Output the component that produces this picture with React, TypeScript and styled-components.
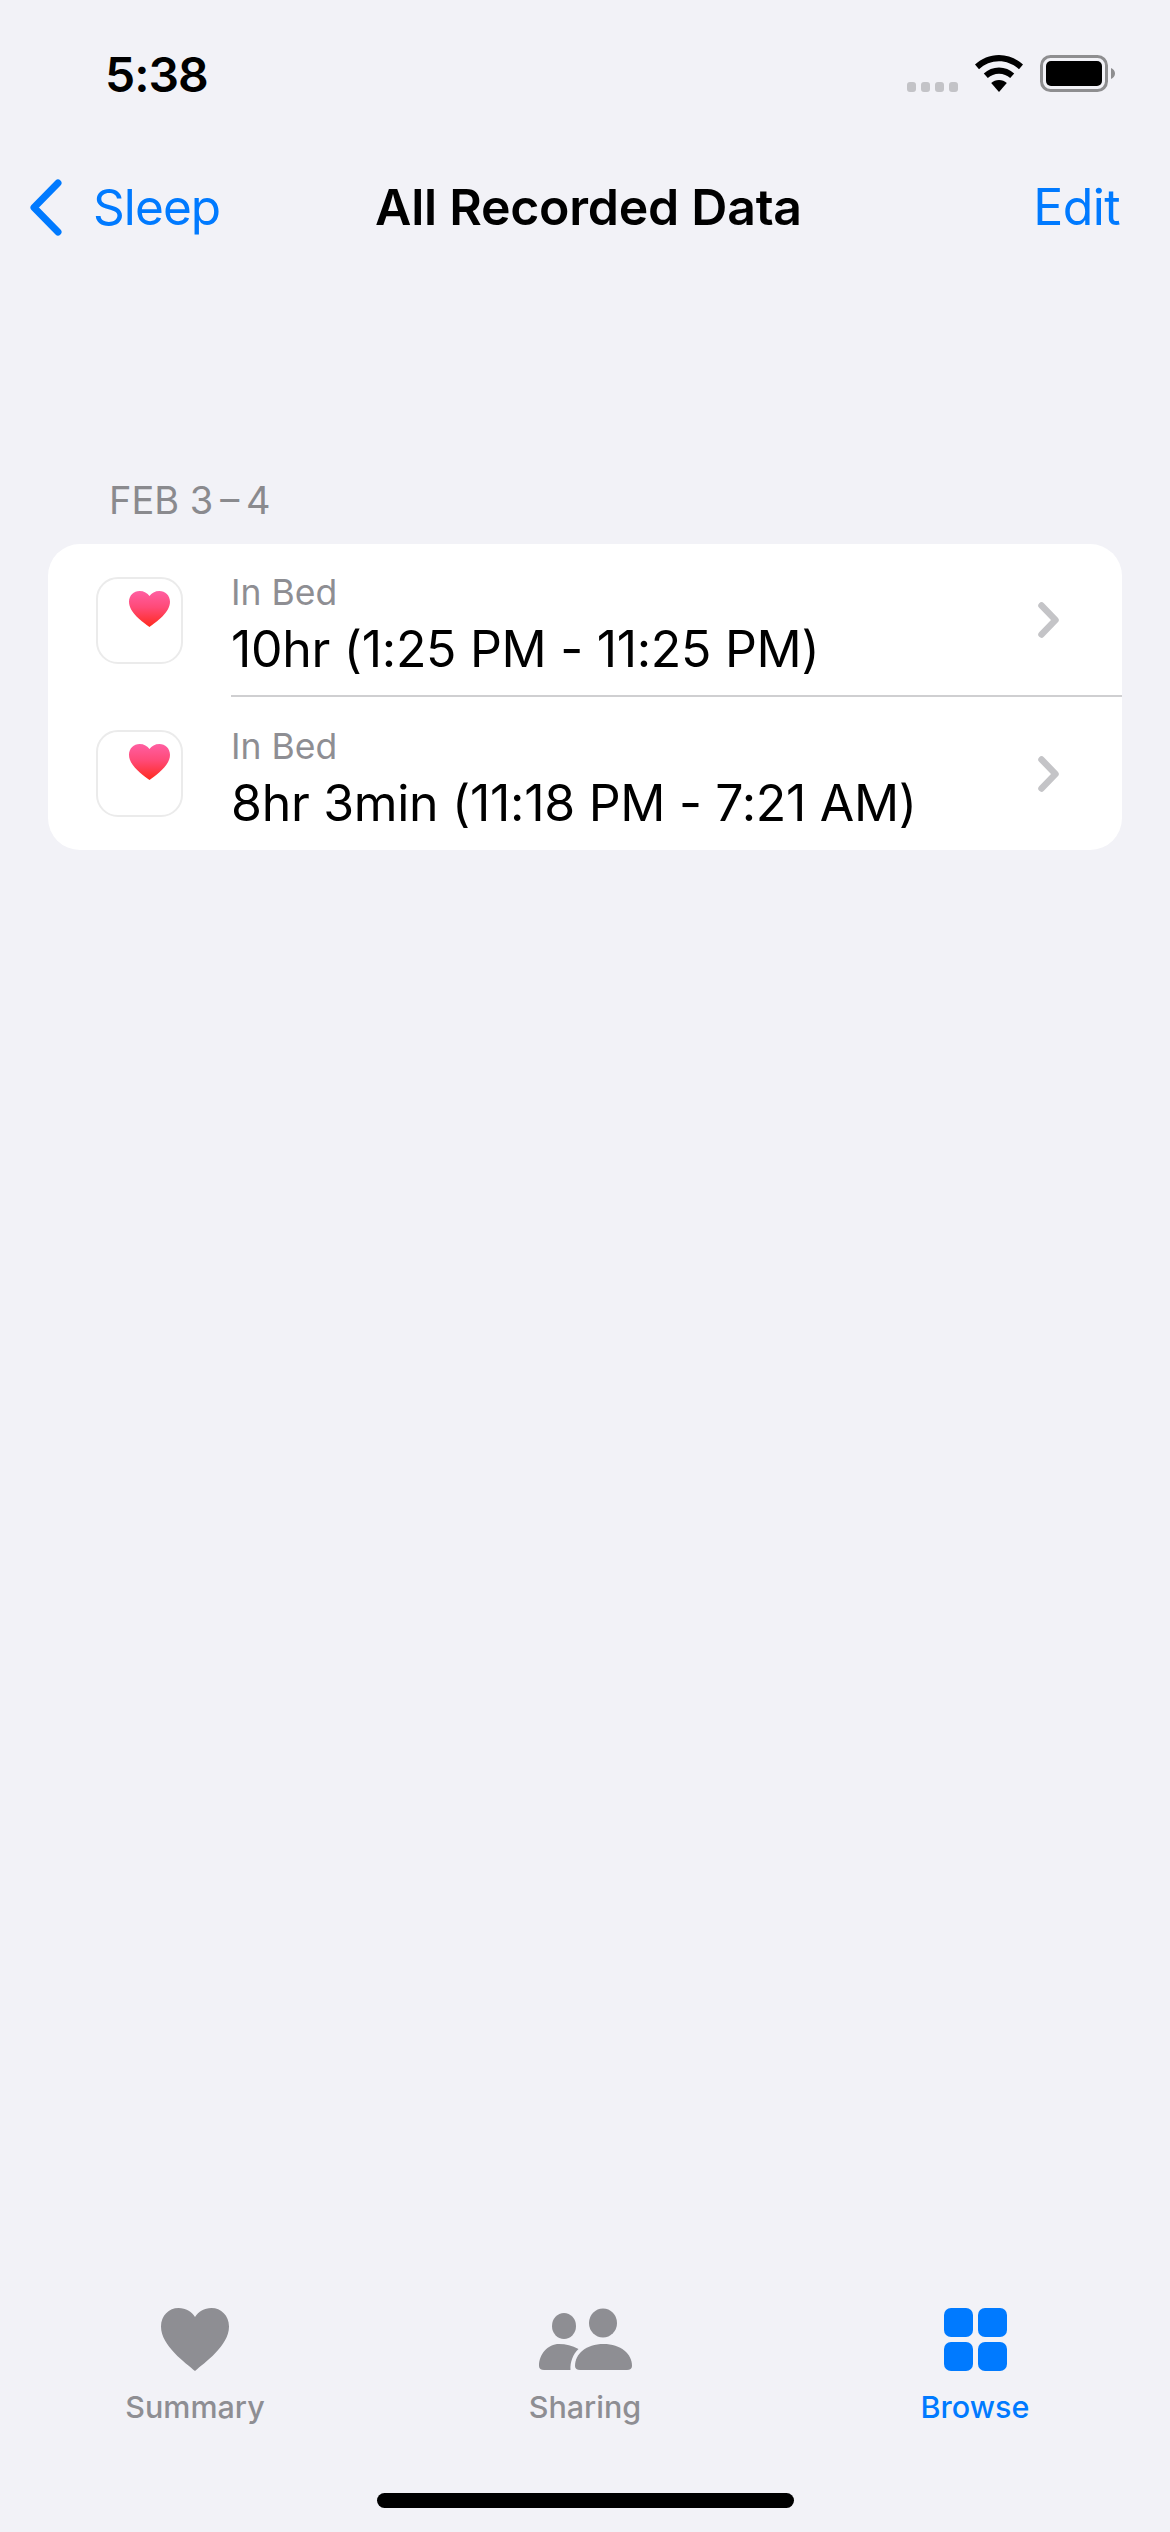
import styled, { createGlobalStyle } from "styled-components";

const GlobalStyle = createGlobalStyle`
  html, body {
    margin: 0;
    padding: 0;
    background-color: #f2f2f7;
  }
  * {
    box-sizing: border-box;
  }
`;

const Page = styled.div`
  display: flex;
  flex-direction: column;
  width: 1170px;
  height: 2532px;
  overflow: hidden;
  background-color: #f2f2f7;
  color: #000;
  font-family: Inter, "Liberation Sans", sans-serif;
`;

const StatusBar = styled.div`
  display: flex;
  justify-content: space-between;
  align-items: flex-start;
  height: 163px;
  padding: 44px 55px 0 105px;
`;

const Time = styled.div`
  font-size: 48px;
  font-weight: 600;
  line-height: 62px;
  letter-spacing: -1px;
`;

const StatusIcons = styled.div`
  display: flex;
  align-items: flex-start;
  padding-top: 11px;
`;

const SignalDots = styled.svg`
  margin: 27px 17px 0 0;
`;

const BatteryIcon = styled.svg`
  margin-left: 17px;
`;

const NavBar = styled.div`
  display: grid;
  grid-template-columns: 346px auto 1fr;
  align-items: center;
  height: 88px;
  padding: 0 50px 0 29px;
`;

const BackLink = styled.a`
  display: flex;
  align-items: center;
  gap: 31px;
  color: #007aff;
  font-size: 49.5px;
  letter-spacing: -0.9px;
`;

const NavTitle = styled.h1`
  margin: 0;
  font-size: 50px;
  font-weight: 600;
  letter-spacing: -0.25px;
`;

const EditLink = styled.a`
  justify-self: end;
  color: #007aff;
  font-size: 50px;
  letter-spacing: -0.6px;
`;

const Content = styled.main`
  flex: 1;
  padding: 227px 48px 0;
`;

const SectionLabel = styled.div`
  height: 66px;
  padding-left: 61px;
  color: #8a8a8e;
  font-size: 38px;
  line-height: 44px;
`;

const Card = styled.div`
  overflow: hidden;
  border-radius: 32px;
  background-color: #fff;
`;

const Row = styled.div`
  display: flex;
  align-items: center;
  height: 153px;
  padding-left: 48px;
`;

const AppTile = styled.div`
  display: flex;
  justify-content: flex-end;
  flex-shrink: 0;
  width: 87px;
  height: 87px;
  padding: 12px 11px 0 0;
  border: 2px solid #ebebeb;
  border-radius: 22px;
`;

const RowBody = styled.div<{ $divider?: boolean }>`
  display: flex;
  align-items: center;
  justify-content: space-between;
  flex: 1;
  align-self: stretch;
  margin-left: 48px;
  padding-right: 63px;
  border-bottom: ${(props) => (props.$divider ? "2px solid #cfcfd1" : "none")};
`;

const RowText = styled.div`
  display: flex;
  flex-direction: column;
  gap: 4px;
  padding-top: 10px;
`;

const RowLabel = styled.div`
  color: #8e8e93;
  font-size: 35.5px;
  line-height: 44px;
`;

const RowValue = styled.div`
  font-size: 50px;
  line-height: 60px;
  letter-spacing: -0.3px;
`;

const RowChevron = styled.svg`
  flex-shrink: 0;
`;

const TabBar = styled.nav`
  display: grid;
  grid-template-columns: repeat(3, 390px);
  height: 193px;
  padding-top: 8px;
`;

const Tab = styled.a<{ $active?: boolean }>`
  display: flex;
  flex-direction: column;
  align-items: center;
  gap: 17px;
  color: ${(props) => (props.$active ? "#007aff" : "#8e8e93")};
  font-size: 30.5px;
  font-weight: 500;
  line-height: 38px;
`;

const TabIcon = styled.svg`
  display: block;
`;

const HomeBar = styled.div`
  flex-shrink: 0;
  width: 417px;
  height: 15px;
  margin: 0 auto 24px;
  border-radius: 8px;
  background-color: #000;
`;

const Heart = () => (
  <svg width="41" height="36" viewBox="0 0 41 36">
    <defs>
      <linearGradient id="heartFill" x1="0" y1="0" x2="0" y2="1">
        <stop offset="0" stopColor="#ff5fa2" />
        <stop offset="0.45" stopColor="#ff4a78" />
        <stop offset="1" stopColor="#ff2a1e" />
      </linearGradient>
    </defs>
    <path
      d="M20.5 36C14 31 0 22 0 10.8 0 4.4 4.8 0 10.6 0c4.4 0 7.8 2 9.9 5 2.1-3 5.5-5 9.9-5C36.200 0 41 4.400 41 10.800 41 22 27 31 20.500 36z"
      fill="url(#heartFill)"
    />
  </svg>
);

const Chevron = () => (
  <RowChevron width="21" height="36" viewBox="0 0 21 36">
    <path
      d="M3.500 3.500L17.500 18 3.500 32.500"
      fill="none"
      stroke="#c4c4c7"
      strokeWidth="6.500"
      strokeLinecap="round"
      strokeLinejoin="round"
    />
  </RowChevron>
);

const records = [
  { id: 1, value: "10hr (1:25 PM - 11:25 PM)" },
  { id: 2, value: "8hr 3min (11:18 PM - 7:21 AM)" },
];

export default function App() {
  return (
    <Page>
      <GlobalStyle />
      <StatusBar>
        <Time>5:38</Time>
        <StatusIcons>
          <SignalDots width="51" height="10" viewBox="0 0 51 10">
            <g fill="#c3c3c7">
              <rect x="0" width="9" height="10" rx="3" />
              <rect x="14" width="9" height="10" rx="3" />
              <rect x="28" width="9" height="10" rx="3" />
              <rect x="42" width="9" height="10" rx="3" />
            </g>
          </SignalDots>
          <svg width="48" height="37" viewBox="0 0 48 37">
            <path
              d="M24 0c9.200 0 17.500 3.600 24 9.500l-4 4.700C38.500 9.300 31.600 6.300 24 6.300S9.500 9.300 4 14.200L0 9.500C6.500 3.600 14.800 0 24 0z"
              fill="#000"
            />
            <path
              d="M24 12.500c5.800 0 11 2.200 15.200 6l-4 4.600c-3-2.700-6.900-4.300-11.200-4.300s-8.200 1.600-11.200 4.300l-4-4.600c4.200-3.800 9.400-6 15.200-6z"
              fill="#000"
            />
            <path d="M24 25c3 0 5.700 1.100 7.800 3L24 37l-7.800-9c2.100-1.900 4.800-3 7.800-3z" fill="#000" />
          </svg>
          <BatteryIcon width="75" height="37" viewBox="0 0 75 37">
            <rect x="1.500" y="1.500" width="65" height="34" rx="9" fill="none" stroke="#8e8e90" strokeWidth="3" />
            <rect x="6" y="6" width="56" height="25" rx="5" fill="#000" />
            <path d="M71 13c2.500 1 4 3 4 5.500S73.500 23 71 24z" fill="#8e8e90" />
          </BatteryIcon>
        </StatusIcons>
      </StatusBar>

      <NavBar>
        <BackLink>
          <svg width="33" height="57" viewBox="0 0 33 57">
            <path
              d="M29 4L5 28.500 29 53"
              fill="none"
              stroke="#007aff"
              strokeWidth="7"
              strokeLinecap="round"
              strokeLinejoin="round"
            />
          </svg>
          Sleep
        </BackLink>
        <NavTitle>All Recorded Data</NavTitle>
        <EditLink>Edit</EditLink>
      </NavBar>

      <Content>
        <SectionLabel>FEB 3{"\u2009–\u2009"}4</SectionLabel>
        <Card>
          {records.map((record, index) => (
            <Row key={record.id}>
              <AppTile>
                <Heart />
              </AppTile>
              <RowBody $divider={index < records.length - 1}>
                <RowText>
                  <RowLabel>In Bed</RowLabel>
                  <RowValue>{record.value}</RowValue>
                </RowText>
                <Chevron />
              </RowBody>
            </Row>
          ))}
        </Card>
      </Content>

      <TabBar>
        <Tab>
          <TabIcon width="68" height="63" viewBox="0 0 68 63">
            <path
              d="M34 63C25 55 0 38 0 18.500 0 7.500 8 0 17.500 0 25 0 30.500 3.500 34 9c3.500-5.500 9-9 16.500-9C60 0 68 7.500 68 18.500 68 38 43 55 34 63z"
              fill="#8e8e93"
            />
          </TabIcon>
          Summary
        </Tab>
        <Tab>
          <TabIcon width="93" height="63" viewBox="0 0 93 63">
            <g fill="#8e8e93">
              <ellipse cx="25" cy="18" rx="12" ry="13" />
              <ellipse cx="64" cy="15" rx="14" ry="14.500" />
              <path d="M5 62C2 62 0 60.500 0 58 0 46 9 36 20 36c7 0 13 1.500 19.500 5C34 46 31 54 31.500 62z" />
              <path d="M41 62c-3 0-5-1.500-5-4C36 46 47 36 64.500 36S93 46 93 58c0 2.500-2 4-5 4z" />
            </g>
          </TabIcon>
          Sharing
        </Tab>
        <Tab $active>
          <TabIcon width="63" height="63" viewBox="0 0 63 63">
            <g fill="#007aff">
              <rect x="0" y="0" width="29" height="29" rx="7" />
              <rect x="34" y="0" width="29" height="29" rx="7" />
              <rect x="0" y="34" width="29" height="29" rx="7" />
              <rect x="34" y="34" width="29" height="29" rx="7" />
            </g>
          </TabIcon>
          Browse
        </Tab>
      </TabBar>
      <HomeBar />
    </Page>
  );
}
